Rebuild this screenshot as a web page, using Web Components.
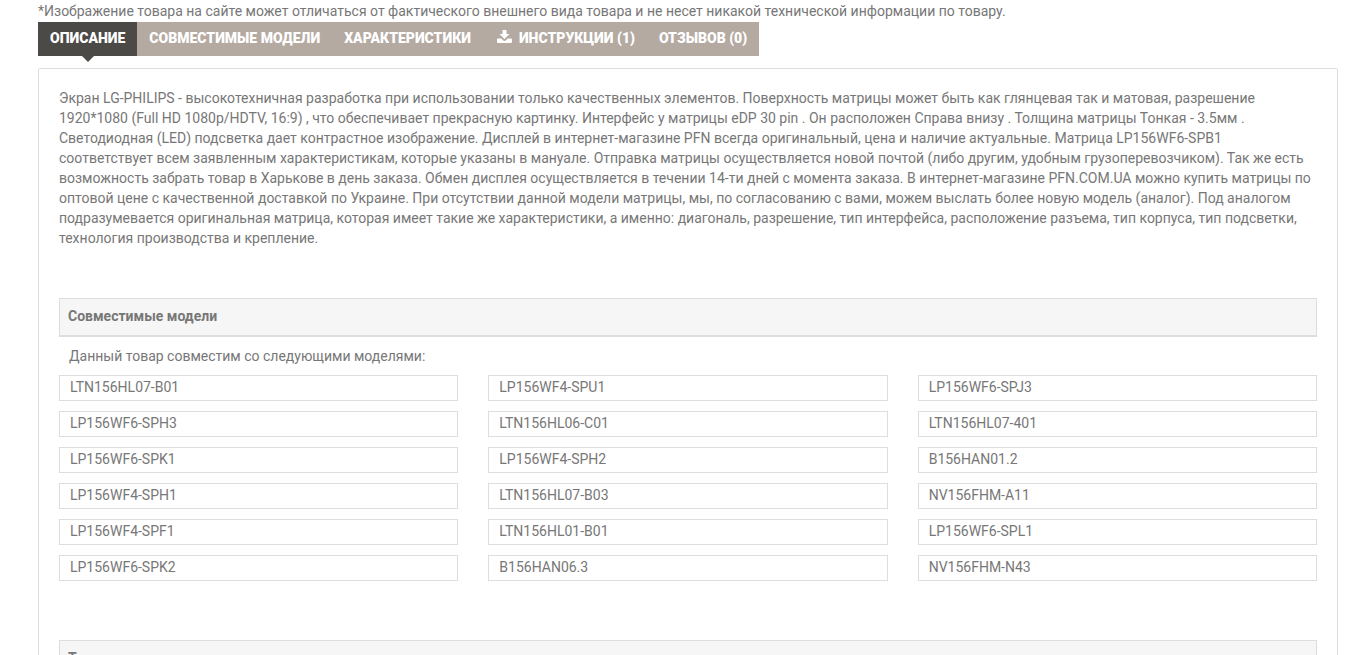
<!DOCTYPE html>
<html lang="ru">
<head>
<meta charset="utf-8">
<title>Экран LG-PHILIPS LP156WF6-SPB1</title>
<style>
body { margin: 0; background: #fff; color: #777; font: 14px/20px Roboto, "Liberation Sans", sans-serif; }
</style>
</head>
<body>
<product-page></product-page>
<script>
const define = (name, html, setup) => {
  const template = document.createElement('template');
  template.innerHTML = html;
  customElements.define(name, class extends HTMLElement {
    constructor() {
      super();
      this.attachShadow({ mode: 'open' }).append(template.content.cloneNode(true));
    }
    connectedCallback() { if (setup) setup(this, this.shadowRoot); }
  });
};

define('tab-link', `
<style>
:host { display: block; }
a { display: flex; position: relative; box-sizing: border-box; height: 34px; padding: 6px 12px 8px; color: #fff; font-weight: 900; text-decoration: none; text-transform: uppercase; white-space: nowrap; }
:host([active]) a { background: #4b4a46; }
:host([active]) a::after { content: ""; position: absolute; left: 50%; top: 100%; margin-left: -6px; border: 6px solid transparent; border-top-color: #4b4a46; border-bottom: 0; }
</style>
<a href="#" role="tab"><slot name="icon"></slot><slot></slot></a>`,
(host, root) => root.querySelector('a').setAttribute('aria-selected', host.hasAttribute('active')));

define('tab-bar', `
<style>
:host { display: flex; width: fit-content; background: #b5aaa2; }
</style>
<slot></slot>`);

define('download-icon', `
<style>
:host { display: block; width: 15px; margin: 0 7px 0 2px; }
svg { display: block; margin-top: 2px; }
</style>
<svg width="15" height="14" viewBox="0 0 15 14" fill="#fff" aria-hidden="true"><path d="M5.5 0h4v4h3L7.5 9l-5-5h3zM1 8.5h3.2L6 10.3a2.1 2.1 0 0 0 3 0l1.8-1.8H14a1 1 0 0 1 1 1V12a1 1 0 0 1-1 1H1a1 1 0 0 1-1-1V9.5a1 1 0 0 1 1-1z"/></svg>`);

define('section-title', `
<style>
:host { display: block; }
h2 { margin: 0; padding: 8px 8px 9px; border: 1px solid #ddd; border-bottom-width: 2px; background: #f6f6f6; font-size: 14px; line-height: 19px; font-weight: 700; }
</style>
<h2><slot></slot></h2>`);

define('model-list', `
<style>
:host { display: block; }
ul { display: grid; grid-template-columns: repeat(3, 1fr); gap: 10px 30px; margin: 0; padding: 0; list-style: none; }
li { box-sizing: border-box; height: 26px; padding: 1px 10px; border: 1px solid #ddd; }
</style>
<ul></ul>`,
(host, root) => root.querySelector('ul').replaceChildren(...host.getAttribute('models').split(' ').map(model => {
  const item = document.createElement('li');
  item.textContent = model;
  return item;
})));

define('product-panel', `
<style>
:host { display: block; padding: 19px 20px; border: 1px solid #ddd; border-radius: 2px; }
</style>
<slot></slot>`);

define('product-page', `
<style>
:host { display: block; margin: 0 10px 0 38px; }
p { margin: 0; }
.note { padding-top: 1px; padding-bottom: 1px; }
product-panel { margin-top: 12px; }
section { margin-top: 50px; }
.lead { padding: 9px 10px; }
section + section { margin-top: 59px; }
</style>
<p class="note">*Изображение товара на сайте может отличаться от фактического внешнего вида товара и не несет никакой технической информации по товару.</p>
<tab-bar role="tablist">
<tab-link active>Описание</tab-link>
<tab-link>Совместимые модели</tab-link>
<tab-link>Характеристики</tab-link>
<tab-link><download-icon slot="icon"></download-icon>Инструкции (1)</tab-link>
<tab-link>Отзывов (0)</tab-link>
</tab-bar>
<product-panel>
<p>Экран LG-PHILIPS - высокотехничная разработка при использовании только качественных элементов. Поверхность матрицы может быть как глянцевая так и матовая, разрешение 1920*1080 (Full HD 1080p/HDTV, 16:9) , что обеспечивает прекрасную картинку. Интерфейс у матрицы eDP 30 pin . Он расположен Справа внизу . Толщина матрицы Тонкая - 3.5мм . Светодиодная (LED) подсветка дает контрастное изображение. Дисплей в интернет-магазине PFN всегда оригинальный, цена и наличие актуальные. Матрица LP156WF6-SPB1 соответствует всем заявленным характеристикам, которые указаны в мануале. Отправка матрицы осуществляется новой почтой (либо другим, удобным грузоперевозчиком). Так же есть возможность забрать товар в Харькове в день заказа. Обмен дисплея осуществляется в течении 14-ти дней с момента заказа. В интернет-магазине PFN.COM.UA можно купить матрицы по оптовой цене с качественной доставкой по Украине. При отсутствии данной модели матрицы, мы, по согласованию с вами, можем выслать более новую модель (аналог). Под аналогом подразумевается оригинальная матрица, которая имеет такие же характеристики, а именно: диагональ, разрешение, тип интерфейса, расположение разъема, тип корпуса, тип подсветки, технология производства и крепление.</p>
<section>
<section-title>Совместимые модели</section-title>
<p class="lead">Данный товар совместим со следующими моделями:</p>
<model-list models="LTN156HL07-B01 LP156WF4-SPU1 LP156WF6-SPJ3 LP156WF6-SPH3 LTN156HL06-C01 LTN156HL07-401 LP156WF6-SPK1 LP156WF4-SPH2 B156HAN01.2 LP156WF4-SPH1 LTN156HL07-B03 NV156FHM-A11 LP156WF4-SPF1 LTN156HL01-B01 LP156WF6-SPL1 LP156WF6-SPK2 B156HAN06.3 NV156FHM-N43"></model-list>
</section>
<section>
<section-title>Технические характеристики</section-title>
</section>
</product-panel>`);
</script>
</body>
</html>
